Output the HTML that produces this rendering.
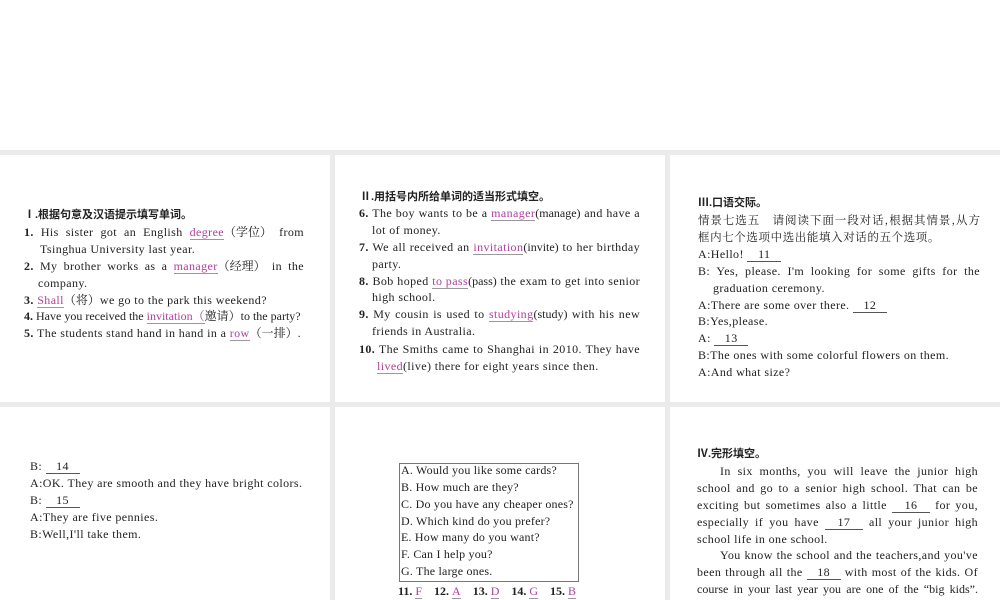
<!DOCTYPE html>
<html><head><meta charset="utf-8"><style>
html,body{margin:0;padding:0;}
body{width:1000px;height:600px;position:relative;background:#fff;overflow:hidden;font-family:"Liberation Serif","Noto Serif CJK SC",serif;color:#222;}
.g{position:absolute;background:#ebebeb;}
.l{position:absolute;height:17px;line-height:17px;font-size:12px;letter-spacing:0.4px;white-space:nowrap;}
.j{text-align:justify;text-align-last:justify;text-justify:inter-word;white-space:normal;overflow:hidden;}
.h{font-family:"Liberation Sans","Noto Sans CJK SC",sans-serif;font-weight:bold;font-size:11px;letter-spacing:0;}
b{font-weight:bold;}
.c{display:inline-block;letter-spacing:0;}
.p{color:#b0409c;border-bottom:1px solid #999;line-height:13px;display:inline-block;}
.bl{display:inline-block;border-bottom:1px solid #555;text-align:center;text-align-last:center;line-height:13px;}
.box{position:absolute;left:399px;top:463px;width:178px;height:117px;border:1px solid #777;}
</style></head><body>
<div class="g" style="left:0;top:150px;width:1000px;height:5px"></div>
<div class="g" style="left:0;top:402px;width:1000px;height:5px"></div>
<div class="g" style="left:330px;top:150px;width:5px;height:450px"></div>
<div class="g" style="left:665px;top:150px;width:5px;height:450px"></div>

<!-- col1 -->
<div class="l h" style="left:24px;top:207px">Ⅰ.根据句意及汉语提示填写单词。</div>
<div class="l j" style="left:24px;top:224px;width:280px"><b>1.</b> His sister got an English <span class="p">degree</span><span class="c">（学位）</span> from</div>
<div class="l" style="left:40px;top:241px">Tsinghua University last year.</div>
<div class="l j" style="left:24px;top:258px;width:280px"><b>2.</b> My brother works as a <span class="p">manager</span><span class="c">（经理）</span> in the</div>
<div class="l" style="left:38px;top:275px">company.</div>
<div class="l" style="left:24px;top:292px"><b>3.</b> <span class="p">Shall</span><span class="c">（将）</span>we go to the park this weekend?</div>
<div class="l" style="left:24px;top:308px;letter-spacing:0"><b>4.</b> Have you received the <span class="p">invitation（</span><span class="c">邀请）</span>to the party?</div>
<div class="l" style="left:24px;top:325px"><b>5.</b> The students stand hand in hand in a <span class="p">row</span><span class="c">（一排）</span>.</div>

<!-- col2 -->
<div class="l h" style="left:360px;top:189px">Ⅱ.用括号内所给单词的适当形式填空。</div>
<div class="l j" style="left:359px;top:205px;width:281px"><b>6.</b> The boy wants to be a <span class="p">manager</span><span class="c">(manage)</span> and have a</div>
<div class="l" style="left:372px;top:222px">lot of money.</div>
<div class="l j" style="left:359px;top:239px;width:281px"><b>7.</b> We all received an <span class="p">invitation</span><span class="c">(invite)</span> to her birthday</div>
<div class="l" style="left:372px;top:256px">party.</div>
<div class="l j" style="left:359px;top:273px;width:281px"><b>8.</b> Bob hoped <span class="p">to pass</span><span class="c">(pass)</span> the exam to get into senior</div>
<div class="l" style="left:372px;top:289px">high school.</div>
<div class="l j" style="left:359px;top:306px;width:281px"><b>9.</b> My cousin is used to <span class="p">studying</span><span class="c">(study)</span> with his new</div>
<div class="l" style="left:372px;top:323px">friends in Australia.</div>
<div class="l j" style="left:359px;top:341px;width:281px"><b>10.</b> The Smiths came to Shanghai in 2010. They have</div>
<div class="l" style="left:377px;top:358px"><span class="p">lived</span>(live) there for eight years since then.</div>

<!-- col3 -->
<div class="l h" style="left:698px;top:195px">Ⅲ.口语交际。</div>
<div class="l j" style="left:698px;top:212px;width:282px;font-family:'Noto Serif CJK SC',serif;font-size:11.5px;letter-spacing:0">情景七选五　请阅读下面一段对话,根据其情景,从方</div>
<div class="l" style="left:698px;top:229px;font-family:'Noto Serif CJK SC',serif;font-size:11.5px;letter-spacing:0.6px">框内七个选项中选出能填入对话的五个选项。</div>
<div class="l" style="left:698px;top:246px">A:Hello! <span class="bl" style="width:34px">11</span></div>
<div class="l j" style="left:698px;top:263px;width:282px">B: Yes, please. I'm looking for some gifts for the</div>
<div class="l" style="left:713px;top:280px">graduation ceremony.</div>
<div class="l" style="left:698px;top:297px">A:There are some over there. <span class="bl" style="width:34px">12</span></div>
<div class="l" style="left:698px;top:313px">B:Yes,please.</div>
<div class="l" style="left:698px;top:330px">A: <span class="bl" style="width:34px">13</span></div>
<div class="l" style="left:698px;top:347px">B:The ones with some colorful flowers on them.</div>
<div class="l" style="left:698px;top:364px">A:And what size?</div>

<!-- bottom col1 -->
<div class="l" style="left:30px;top:458px">B: <span class="bl" style="width:34px">14</span></div>
<div class="l" style="left:30px;top:475px">A:OK. They are smooth and they have bright colors.</div>
<div class="l" style="left:30px;top:492px">B: <span class="bl" style="width:34px">15</span></div>
<div class="l" style="left:30px;top:509px">A:They are five pennies.</div>
<div class="l" style="left:30px;top:526px">B:Well,I'll take them.</div>

<!-- bottom col2 -->
<div class="box"></div>
<div class="l" style="left:401px;top:462px;letter-spacing:0.2px">A. Would you like some cards?</div>
<div class="l" style="left:401px;top:479px;letter-spacing:0.2px">B. How much are they?</div>
<div class="l" style="left:401px;top:496px;letter-spacing:0.2px">C. Do you have any cheaper ones?</div>
<div class="l" style="left:401px;top:513px;letter-spacing:0.2px">D. Which kind do you prefer?</div>
<div class="l" style="left:401px;top:529px;letter-spacing:0.2px">E. How many do you want?</div>
<div class="l" style="left:401px;top:546px;letter-spacing:0.2px">F. Can I help you?</div>
<div class="l" style="left:401px;top:563px;letter-spacing:0.2px">G. The large ones.</div>
<div class="l" style="left:398px;top:583px;letter-spacing:0"><b>11.</b> <span class="p">F</span>&nbsp;&nbsp;&nbsp; <b>12.</b> <span class="p">A</span>&nbsp;&nbsp;&nbsp; <b>13.</b> <span class="p">D</span>&nbsp;&nbsp;&nbsp; <b>14.</b> <span class="p">G</span>&nbsp;&nbsp;&nbsp; <b>15.</b> <span class="p">B</span></div>

<!-- bottom col3 -->
<div class="l h" style="left:697px;top:446px">Ⅳ.完形填空。</div>
<div class="l j" style="left:720px;top:463px;width:258px">In six months, you will leave the junior high</div>
<div class="l j" style="left:697px;top:480px;width:281px">school and go to a senior high school. That can be</div>
<div class="l j" style="left:697px;top:497px;width:281px">exciting but sometimes also a little <span class="bl" style="width:38px">16</span> for you,</div>
<div class="l j" style="left:697px;top:514px;width:281px">especially if you have <span class="bl" style="width:38px">17</span> all your junior high</div>
<div class="l" style="left:697px;top:531px">school life in one school.</div>
<div class="l j" style="left:720px;top:547px;width:258px">You know the school and the teachers,and you've</div>
<div class="l j" style="left:697px;top:564px;width:281px">been through all the <span class="bl" style="width:34px">18</span> with most of the kids. Of</div>
<div class="l j" style="left:697px;top:581px;width:281px;letter-spacing:0">course in your last year you are one of the “big kids”.</div>
</body></html>
